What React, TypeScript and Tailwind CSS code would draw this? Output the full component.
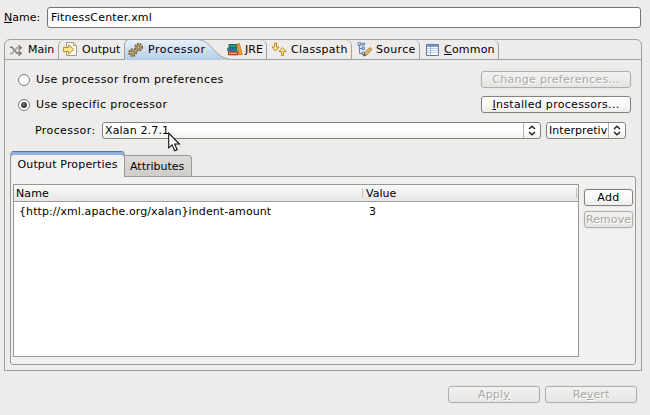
import React from "react";

type BoxProps = { children?: React.ReactNode; className?: string };

function Label({ children, className = "" }: BoxProps) {
  return <span className={`whitespace-nowrap leading-[14px] ${className}`}>{children}</span>;
}

function Button({ children, className = "", disabled = false }: BoxProps & { disabled?: boolean }) {
  const tone = disabled
    ? "border-[#b0aeab] text-[#aaa7a4] [text-shadow:1px_1px_0_#fff] bg-linear-to-b from-[#f2f1f0] to-[#e6e5e3]"
    : "border-[#85827e] text-black bg-linear-to-b from-white via-[#fafafa] to-[#eeedec]";
  return (
    <button
      disabled={disabled}
      className={`flex h-[17px] shrink-0 items-center justify-center whitespace-nowrap rounded-[3px] border leading-[14px] shadow-[0_0_0_1px_#e9e8e6] ${tone} ${className}`}
    >
      {children}
    </button>
  );
}

function Combo({ children, className = "" }: BoxProps) {
  return (
    <div className={`flex h-[17px] shrink-0 rounded-[3px] border border-[#85827e] bg-linear-to-b from-white from-50% to-[#f0efee] ${className}`}>
      <div className="flex min-w-0 flex-1 items-center pl-[2px]">{children}</div>
      <div className="flex w-[17px] items-center justify-center border-l border-[#b7b5b2]">
        <svg width="8" height="11" viewBox="0 0 8 11" fill="none" stroke="#222" strokeWidth="1.5">
          <path d="M1 4 L4 1.2 L7 4 M1 7 L4 9.8 L7 7" />
        </svg>
      </div>
    </div>
  );
}

function Radio({ checked = false }: { checked?: boolean }) {
  return (
    <span className="flex size-[12px] shrink-0 items-center justify-center rounded-full border border-[#7c7a77] bg-white">
      {checked && <span className="size-[6px] rounded-full bg-radial-[at_40%_35%] from-[#777] to-[#111]" />}
    </span>
  );
}

function MainIcon() {
  return (
    <svg width="14" height="12" viewBox="0 0 14 12" fill="none" strokeWidth="1.5">
      <path d="M1 3.2 H3 L8 9.2 H11" stroke="#7d7a70" />
      <path d="M1 9.5 H3 L8 3.7 H11" stroke="#a5a093" />
      <path d="M9.5 1.3 L12.2 3.7 L9.5 6 M9.5 7 L12.2 9.2 L9.5 11.5" stroke="#7d7a70" />
    </svg>
  );
}

function OutputIcon() {
  return (
    <svg width="15" height="15" viewBox="0 0 15 15">
      <path d="M3.5 .5 H10.5 L13.5 3.5 V13.5 H3.5 Z" fill="#f8fbff" stroke="#a39b86" />
      <path d="M10.5 .5 V3.5 H13.5" fill="#e7dcae" stroke="#b6a87e" />
      <path d="M.5 5.5 H5.5 V2.8 L10.8 7.5 L5.5 12.2 V9.5 H.5 Z" fill="#ffe58b" stroke="#c58a1a" />
    </svg>
  );
}

function Gear({ x, y, r }: { x: number; y: number; r: number }) {
  return (
    <g transform={`translate(${x} ${y})`}>
      <circle r={r} fill="none" stroke="#75602f" strokeWidth="1.6" strokeDasharray="1.7 1.25" />
      <circle r={r - 0.8} fill="#c5ae78" stroke="#816b3a" strokeWidth=".8" />
      <circle r="1.2" fill="#eadfbd" stroke="#6e5927" strokeWidth=".8" />
    </g>
  );
}

function GearsIcon() {
  return (
    <svg width="16" height="16" viewBox="0 0 16 16">
      <Gear x={10.7} y={5.2} r={3.6} />
      <Gear x={4.6} y={10.6} r={3.6} />
    </svg>
  );
}

function BooksIcon() {
  return (
    <svg width="16" height="13" viewBox="0 0 16 13">
      <path d="M2 1.5 H10 V4.5 H2 Z" fill="#2f968c" stroke="#19655f" />
      <path d="M.8 5 H10 V8 H.8 Z" fill="#3d67ac" stroke="#1f7d68" />
      <path d="M1.5 8.8 H11 V11.8 H1.5 Z" fill="#c85128" stroke="#983712" />
      <path d="M2 10.3 H10" stroke="#f2c5a4" />
      <path d="M10 1 L12.3 .5 L15.3 11.2 L12.6 12 Z" fill="#f6a22b" stroke="#c97611" strokeWidth=".8" />
    </svg>
  );
}

function ClasspathIcon() {
  return (
    <svg width="16" height="15" viewBox="0 0 16 15" fill="#ffe69b" stroke="#c58b18">
      <path d="M3.5 1 H5.5 V5 H8 L4.5 9 L1 5 H3.5 Z" />
      <path d="M10.5 13.5 H12.5 V9.5 H15 L11.5 5.5 L8 9.5 H10.5 Z" />
    </svg>
  );
}

function SourceIcon() {
  return (
    <svg width="16" height="15" viewBox="0 0 16 15" fill="none">
      <path d="M2.5 3 V11.5 H5 M2.5 6.5 H5" stroke="#607fb2" />
      <path d="M1 .8 H4 V3.5 H1 Z M5 5 H7.5 V7.5 H5 Z M5 10 H7.5 V12.5 H5 Z M5 1.2 H7.5 V3 H5 Z" fill="#c7d7ef" stroke="#4e6fa8" strokeWidth=".8" />
      <path d="M6.5 13.8 L7.5 10.8 L12.8 5.5 L15 7.5 L9.6 13 Z" fill="#e2b36b" stroke="#94713c" strokeWidth=".8" />
      <path d="M6 14.4 L7.3 11.5 L9.2 13.2 Z" fill="#564b43" />
    </svg>
  );
}

function CommonIcon() {
  return (
    <svg width="13" height="12" viewBox="0 0 13 12">
      <path d="M.5 .5 H12.5 V11.5 H.5 Z" fill="#fff" stroke="#5d79a5" />
      <path d="M1 1 H12 V3 H1 Z" fill="#7d9bc8" />
      <path d="M1 4.5 H12 M1 6.5 H12 M1 8.5 H12" stroke="#bdcde3" />
      <path d="M4.5 3 V11" stroke="#9db2d2" />
    </svg>
  );
}

function Cursor() {
  return (
    <svg className="absolute left-[168px] top-[132px]" width="13" height="21" viewBox="0 0 13 21">
      <path d="M.7 1 V15.8 L4.1 12.8 L6.7 18.8 L9.2 17.7 L6.7 12 H11.4 Z" fill="#fff" stroke="#111" strokeWidth="1.1" />
    </svg>
  );
}

function LaunchTabs() {
  return (
    <div className="flex h-[20px] shrink-0 border-b border-[#a09e9b]">
      <div className="flex w-[53px] items-center pl-[4px]">
        <MainIcon />
        <Label className="ml-[5px] tracking-[0px]">Main</Label>
      </div>
      <div className="flex w-[66px] items-center rounded-tl-[6px] border-l border-[#a5a3a0] pl-[4px]">
        <OutputIcon />
        <Label className="ml-[4px] tracking-[0px]">Output</Label>
      </div>
      <div className="relative flex w-[103px] items-center pl-[4px]">
        <svg className="absolute left-0 top-0" width="110" height="20" viewBox="0 0 110 20">
          <defs>
            <linearGradient id="selected" x1="0" y1="0" x2="0" y2="1">
              <stop offset="0" stopColor="#eaf1fa" />
              <stop offset="1" stopColor="#b5cdeb" />
            </linearGradient>
          </defs>
          <path d="M.5 20 V5 Q.5 0 5 -.5 H74 C88 0 90 18.5 108 19.5 V20 Z" fill="url(#selected)" />
          <path d="M.5 19 V5 Q.5 0 5 -.5 M74 -.5 C88 0 90 18.5 107 19.5" fill="none" stroke="#a09e9b" />
        </svg>
        <span className="relative flex items-center">
          <GearsIcon />
          <Label className="ml-[4px] tracking-[0.5px]">Processor</Label>
        </span>
      </div>
      <div className="relative flex w-[40px] items-center rounded-tr-[6px] border-r border-[#a5a3a0]">
        <BooksIcon />
        <Label className="ml-[2px] tracking-[0px]">JRE</Label>
      </div>
      <div className="flex w-[85px] items-center rounded-tr-[6px] border-r border-[#a5a3a0] pl-[4px]">
        <ClasspathIcon />
        <Label className="ml-[4px] tracking-[0.3px]">Classpath</Label>
      </div>
      <div className="flex w-[68px] items-center rounded-tr-[6px] border-r border-[#a5a3a0] pl-[5px]">
        <SourceIcon />
        <Label className="ml-[3px] tracking-[0.3px]">Source</Label>
      </div>
      <div className="flex w-[79px] items-center rounded-tr-[6px] border-r border-[#a5a3a0] pl-[6px]">
        <CommonIcon />
        <Label className="ml-[5px] tracking-[0.2px]"><u>C</u>ommon</Label>
      </div>
    </div>
  );
}

function PropertiesTable() {
  return (
    <div className="h-[173px] w-[566px] border border-[#9a9794] bg-white">
      <div className="flex h-[17px] items-center border-b border-[#9f9d9a] bg-linear-to-b from-[#f9f9f8] to-[#e7e6e4]">
        <div className="flex h-full w-[348px] items-center pl-[2px] pt-[2px]"><Label className="tracking-[0.1px]">Name</Label></div>
        <div className="flex h-[10px] w-[215px] items-center border-x border-[#c3c1be] pl-[3px] pt-[2px]"><Label className="tracking-[0px]">Value</Label></div>
      </div>
      <div className="flex h-[19px] items-center">
        <div className="flex w-[349px] pl-[5px]"><Label className="tracking-[0.09px]">{"{http://xml.apache.org/xalan}indent-amount"}</Label></div>
        <Label className="pl-[6px]">3</Label>
      </div>
    </div>
  );
}

export default function App() {
  return (
    <div className="relative flex h-[415px] w-[650px] flex-col overflow-hidden bg-[#edeceb] font-['DejaVu_Sans',sans-serif] text-[11px] tracking-[0.4px] text-black">
      <div className="flex shrink-0 items-center pl-[4px] pt-[7px]">
        <Label className="w-[43px] tracking-[0px]"><u>N</u>ame:</Label>
        <div className="flex h-[21px] w-[594px] items-center rounded-[3px] border border-[#777572] bg-white pl-[3px]">
          <Label className="tracking-[0.18px]">FitnessCenter.xml</Label>
        </div>
      </div>
      <div className="ml-[4px] mt-[11px] flex h-[332px] w-[638px] shrink-0 flex-col rounded-t-[6px] border border-[#a09e9b]">
        <LaunchTabs />
        <div className="ml-[13px] mt-[11px] flex h-[17px] w-[613px] shrink-0 items-center">
          <Radio />
          <Label className="ml-[6px] tracking-[0.41px]">Use processor from preferences</Label>
          <Button disabled className="ml-auto w-[150px] tracking-[0.3px]">Change preferences...</Button>
        </div>
        <div className="ml-[13px] mt-[8px] flex h-[17px] w-[613px] shrink-0 items-center">
          <Radio checked />
          <Label className="ml-[6px]">Use specific processor</Label>
          <Button className="ml-auto w-[150px] tracking-[0.3px]"><span><u>I</u>nstalled processors...</span></Button>
        </div>
        <div className="ml-[30px] mt-[9px] flex h-[17px] shrink-0 items-center">
          <Label className="w-[67px]">Processor:</Label>
          <Combo className="w-[439px]"><Label className="tracking-[0.15px]">Xalan 2.7.1</Label></Combo>
          <Combo className="ml-[5px] w-[80px]"><Label className="tracking-[0.05px]">Interpretiv</Label></Combo>
        </div>
        <div className="ml-[5px] mt-[12px] flex h-[26px] shrink-0 items-end">
          <div className="relative z-10 flex h-[26px] w-[115px] items-center justify-center rounded-t-[4px] border border-b-0 border-[#5078a8] border-r-[#9b9895] border-l-[#9b9895] bg-[#f2f1f0] shadow-[inset_0_3px_0_#8fb1dc]">
            <Label className="tracking-[0.17px]">Output Properties</Label>
          </div>
          <div className="flex h-[22px] w-[67px] items-center rounded-tr-[4px] border border-b-0 border-l-0 border-[#9b9895] bg-linear-to-b from-[#dddbd9] to-[#cfcdca] pl-[5px]">
            <Label className="tracking-[0px]">Attributes</Label>
          </div>
        </div>
        <div className="-mt-px ml-[5px] flex h-[189px] w-[626px] shrink-0 rounded-b-[3px] rounded-tr-[3px] border border-[#9b9895] bg-[#f2f1f0] pl-[2px] pt-[7px]">
          <PropertiesTable />
          <div className="ml-[5px] flex flex-col gap-[5px] pt-[5px]">
            <Button className="w-[49px]">Add</Button>
            <Button disabled className="w-[49px] tracking-[0.1px]">Remove</Button>
          </div>
        </div>
      </div>
      <div className="mt-[15px] flex gap-[5px] pl-[448px]">
        <Button disabled className="w-[92px] tracking-[0.2px]"><span>Appl<u>y</u></span></Button>
        <Button disabled className="w-[92px] tracking-[0.1px]"><span>Re<u>v</u>ert</span></Button>
      </div>
      <Cursor />
    </div>
  );
}
